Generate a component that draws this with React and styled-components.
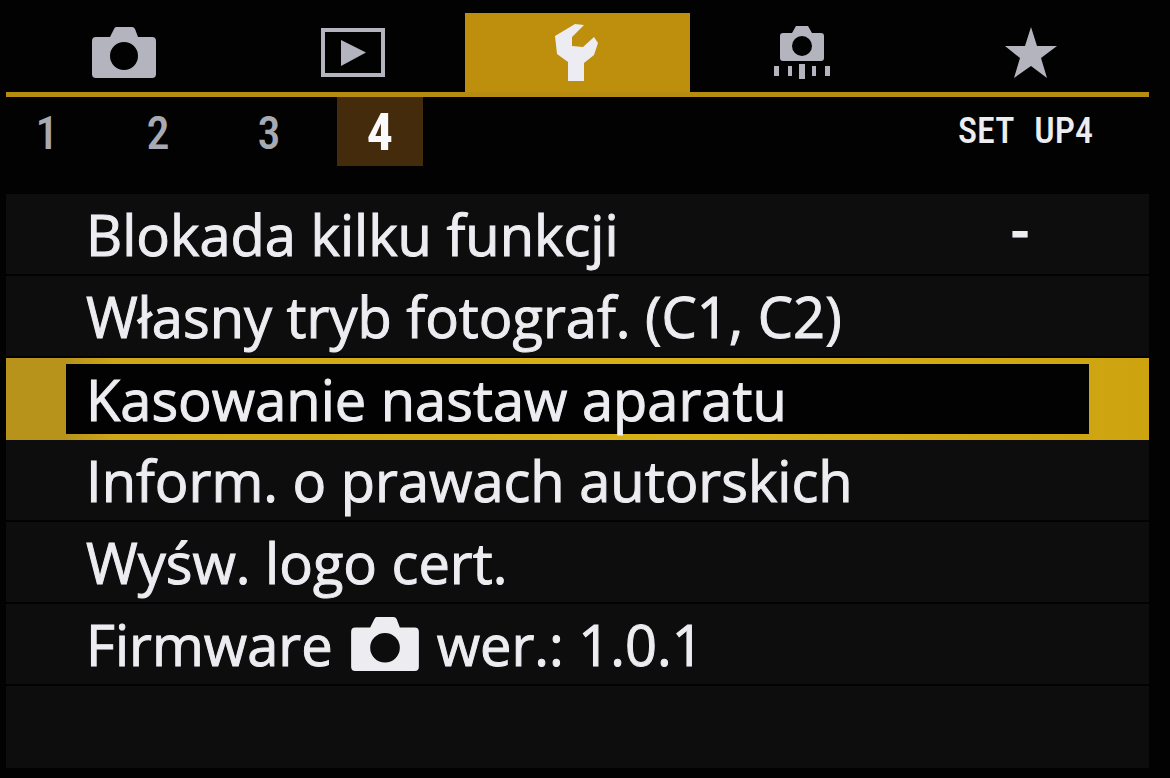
import React, { useState } from "react";
import styled, { createGlobalStyle } from "styled-components";

const GlobalStyle = createGlobalStyle`
  *, *::before, *::after { box-sizing: border-box; }
  body {
    margin: 0;
    background: #020202;
    color: #ececf1;
    font-family: "Open Sans", "Noto Sans", sans-serif;
  }
  button {
    margin: 0;
    padding: 0;
    border: 0;
    background: none;
    color: inherit;
    font: inherit;
    cursor: pointer;
  }
`;

const Screen = styled.main`
  min-height: 100vh;
  padding: 13px 21px 8px 6px;
`;

const TabBar = styled.nav`
  display: grid;
  grid-template-columns: 21fr 20fr 20fr 20fr 21fr;
  height: 84px;
  border-bottom: 5px solid #b68c10;
`;

const Tab = styled.button`
  display: flex;
  align-items: center;
  justify-content: center;
  color: ${(p) => (p.$active ? "#ececf2" : "#b4b4be")};
  background: ${(p) => (p.$active ? "#bd8f0c" : "transparent")};
`;

const SubBar = styled.div`
  display: flex;
  align-items: flex-start;
  justify-content: space-between;
  height: 97px;
  padding-right: 56px;
  font-family: "Roboto Condensed", "Open Sans", sans-serif;
`;

const Pages = styled.div`
  display: flex;
  gap: 25px;
  margin-left: -2px;
`;

const Page = styled.button`
  width: 86px;
  height: 69px;
  font-size: ${(p) => (p.$active ? "52px" : "46px")};
  line-height: 72px;
  font-weight: ${(p) => (p.$active ? 700 : 500)};
  color: ${(p) => (p.$active ? "#fafafc" : "#a9a9b3")};
  background: ${(p) => (p.$active ? "#442b0b" : "transparent")};
`;

const PageTitle = styled.h1`
  display: flex;
  gap: 20px;
  margin: 0;
  font-size: 36px;
  line-height: 68px;
  font-weight: 500;
`;

const Menu = styled.ul`
  margin: 0;
  padding: 0;
  list-style: none;
`;

const MenuItem = styled.li`
  height: 82px;
  background: ${(p) =>
    p.$active
      ? "linear-gradient(90deg, #b8931b 0, #b8931b 60px, #cfa716 110px, #d8b018 60%, #cda410 100%)"
      : "#0d0d0e"};
  border-bottom: ${(p) => (p.$active || p.$last ? "0" : "2px solid #020202")};
  padding: ${(p) => (p.$active ? "6px 60px" : "0 60px")};
`;

const MenuButton = styled.button`
  display: flex;
  align-items: center;
  justify-content: space-between;
  width: 100%;
  height: 100%;
  padding: 0 60px 0 20px;
  font-size: 56px;
  line-height: 70px;
  font-weight: 400;
  -webkit-text-stroke: 1px currentColor;
  text-align: left;
  white-space: nowrap;
  background: ${(p) => (p.$active ? "#020202" : "transparent")};
`;

const Label = styled.span`
  display: flex;
  align-items: center;
  gap: 18px;
`;

const Value = styled.span`
  padding-bottom: 14px;
  font-weight: 600;
`;

function CameraIcon({ width, height }) {
  return (
    <svg width={width} height={height} viewBox="0 0 64 51" fill="currentColor" aria-hidden="true">
      <path
        fillRule="evenodd"
        d="M24 0H40Q42 0 43 2L46 10H60Q64 10 64 14V47Q64 51 60 51H4Q0 51 0 47V14Q0 10 4 10H18L22 2Q23 0 24 0ZM32 15A14 14 0 1 0 32 43A14 14 0 1 0 32 15Z"
      />
    </svg>
  );
}

function PlaybackIcon() {
  return (
    <svg width="64" height="49" viewBox="0 0 64 49" aria-hidden="true">
      <rect x="2" y="2" width="60" height="45" fill="none" stroke="currentColor" strokeWidth="4" />
      <path d="M20 12L45 24.500L20 38Z" fill="currentColor" />
    </svg>
  );
}

function WrenchIcon() {
  return (
    <svg width="44" height="58" viewBox="0 0 44 58" fill="currentColor" aria-hidden="true">
      <path d="M20 0L29 1L17 13V22L28 23L39 13L43 19L39 31L29 39V57H13V38L2 30L0 12Z" />
    </svg>
  );
}

function CustomIcon() {
  return (
    <svg width="56" height="53" viewBox="0 0 56 53" fill="currentColor" aria-hidden="true">
      <path
        fillRule="evenodd"
        d="M22 0H34L38 7H47Q50 7 50 10V32Q50 35 47 35H9Q6 35 6 32V10Q6 7 9 7H18ZM28 10A10 10 0 1 0 28 30A10 10 0 1 0 28 10Z"
      />
      <path d="M0 40H5V50H0ZM14 40H18V50H14ZM25 38H31V53H25ZM38 40H42V50H38ZM51 40H56V50H51Z" />
    </svg>
  );
}

function StarIcon() {
  return (
    <svg width="52" height="51" viewBox="0 0 52 51" fill="currentColor" aria-hidden="true">
      <path d="M26 0L32 19H52L36 31L42 51L26 39L9 51L15 31L0 19H20Z" />
    </svg>
  );
}

const TABS = [
  { name: "Fotografowanie", icon: <CameraIcon width={64} height={51} /> },
  { name: "Odtwarzanie", icon: <PlaybackIcon /> },
  { name: "Ustawienia", icon: <WrenchIcon /> },
  { name: "Funkcje indywidualne", icon: <CustomIcon /> },
  { name: "Moje menu", icon: <StarIcon /> },
];

const ITEMS = [
  { id: "lock", label: "Blokada kilku funkcji", value: "-" },
  { id: "custom", label: "Własny tryb fotograf. (C1, C2)" },
  { id: "reset", label: "Kasowanie nastaw aparatu" },
  { id: "copyright", label: "Inform. o prawach autorskich" },
  { id: "cert", label: "Wyśw. logo cert." },
  {
    id: "firmware",
    label: (
      <>
        <span>Firmware</span>
        <CameraIcon width={68} height={54} />
        <span>wer.: 1.0.1</span>
      </>
    ),
  },
];

export default function App() {
  const [tab, setTab] = useState(2);
  const [page, setPage] = useState(4);
  const [item, setItem] = useState("reset");

  return (
    <>
      <GlobalStyle />
      <Screen>
        <TabBar>
          {TABS.map((t, i) => (
            <Tab key={t.name} $active={i === tab} aria-label={t.name} onClick={() => setTab(i)}>
              {t.icon}
            </Tab>
          ))}
        </TabBar>
        <SubBar>
          <Pages>
            {[1, 2, 3, 4].map((n) => (
              <Page key={n} $active={n === page} onClick={() => setPage(n)}>
                {n}
              </Page>
            ))}
          </Pages>
          <PageTitle>
            <span>SET</span> <span>{`UP${page}`}</span>
          </PageTitle>
        </SubBar>
        <Menu>
          {ITEMS.map(({ id, label, value }) => (
            <MenuItem key={id} $active={id === item}>
              <MenuButton $active={id === item} onClick={() => setItem(id)}>
                <Label>{label}</Label>
                {value && <Value>{value}</Value>}
              </MenuButton>
            </MenuItem>
          ))}
          <MenuItem $last aria-hidden="true" />
        </Menu>
      </Screen>
    </>
  );
}
